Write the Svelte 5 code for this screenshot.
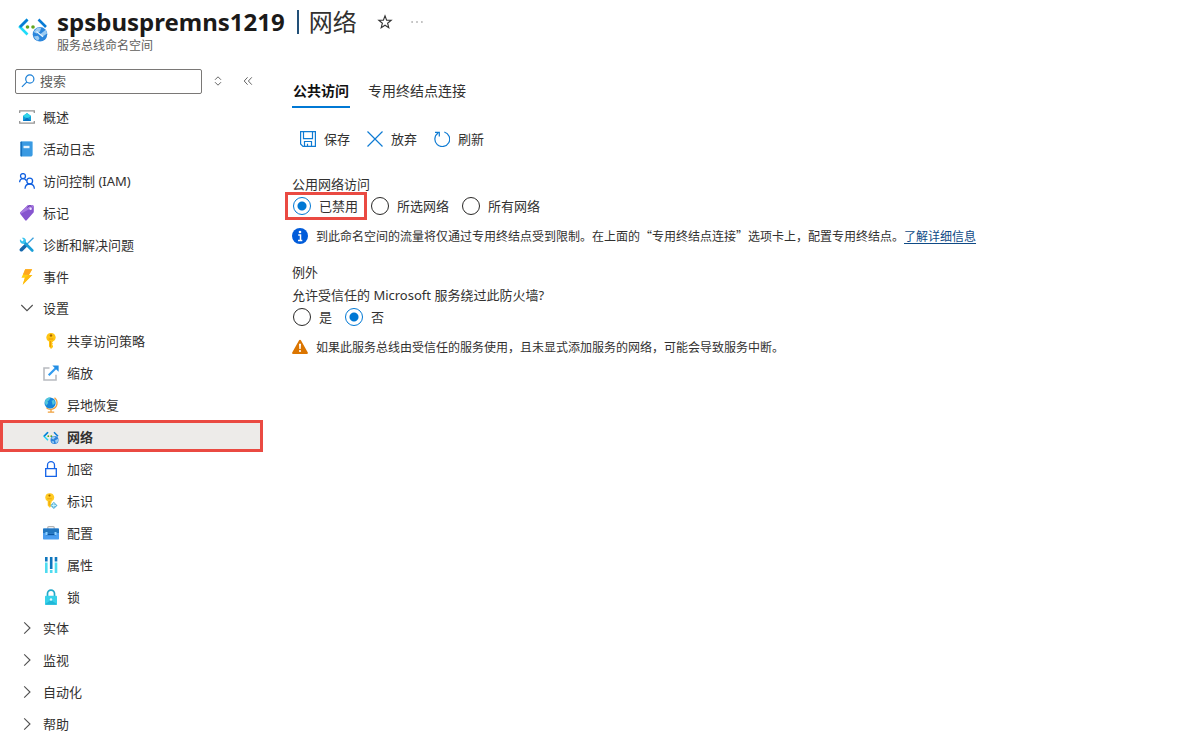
<script>
  let access = $state('disabled');
  let trusted = $state('no');
  let search = $state('');

  const items = [
    { icon: 'overview', text: '概述' },
    { icon: 'log', text: '活动日志' },
    { icon: 'people', text: '访问控制 (IAM)' },
    { icon: 'tag', text: '标记' },
    { icon: 'tools', text: '诊断和解决问题' },
    { icon: 'bolt', text: '事件' },
  ];

  const settings = [
    { icon: 'key', text: '共享访问策略' },
    { icon: 'scale', text: '缩放' },
    { icon: 'globe', text: '异地恢复' },
    { icon: 'network', text: '网络', active: true },
    { icon: 'padlock', text: '加密' },
    { icon: 'identity', text: '标识' },
    { icon: 'toolbox', text: '配置' },
    { icon: 'bars', text: '属性' },
    { icon: 'lock', text: '锁' },
  ];

  const groups = ['实体', '监视', '自动化', '帮助'];

  const accessOptions = [
    { value: 'disabled', text: '已禁用', marked: true },
    { value: 'selected', text: '所选网络' },
    { value: 'all', text: '所有网络' },
  ];

  const trustedOptions = [
    { value: 'yes', text: '是' },
    { value: 'no', text: '否' },
  ];
</script>

{#snippet icon(name)}
  <svg class="icon" viewBox="0 0 16 16" fill="none" aria-hidden="true">
    {#if name === 'overview'}
      <path d="M.7 4V1.800h14.600V4M.7 12v2.200h14.600V12" stroke="#949494" stroke-width="1.300" />
      <path d="M4 7l4-3 4 3v5H4z" fill="#0f9fd8" />
      <path d="M4 7l4-3 4 3-4 2.500z" fill="#32d4e8" />
      <path d="M4 12l4-3.600L12 12z" fill="#0a74c4" />
    {:else if name === 'log'}
      <path d="M3 .5h11v14H3z" fill="#8cc8f2" />
      <rect x="1.500" y=".5" width="11.600" height="15" rx="1" fill="#3a9ae2" />
      <rect x="1.500" y=".5" width="1.600" height="15" rx=".8" fill="#1570bd" />
      <rect x="4.500" y="4.800" width="6" height="2.400" fill="#e6f4ff" />
    {:else if name === 'people'}
      <g stroke="#1060e0" stroke-width="1.300">
        <circle cx="4" cy="3.100" r="2.500" />
        <circle cx="10.700" cy="8.100" r="2.900" />
        <path d="M.6 9.200C.8 6.800 2.200 5.700 4 5.700c1.500 0 2.800.7 3.400 2M6 15.700c.2-2.900 2.200-4.700 4.700-4.700s4.500 1.800 4.700 4.700" />
      </g>
    {:else if name === 'tag'}
      <path d="M1.300 7.300L8 .9c.5-.5 1-.6 1.700-.6h3.600c1 0 1.500.6 1.500 1.500v4.600c0 .7-.2 1.200-.7 1.700L7.700 15.300c-.5.5-1 .5-1.500 0L1.300 9c-.5-.6-.5-1.200 0-1.700z" fill="#8655cf" />
      <path d="M1.300 7.300L8 .9c.5-.5 1-.6 1.700-.6h3.600c1 0 1.500.6 1.500 1.500L1.400 9.100c-.6-.7-.6-1.200-.1-1.800z" fill="#a67ae0" />
      <path d="M8.500 2.500c1-2 3-2.400 4-.7" stroke="#5b2a9d" />
      <circle cx="11.600" cy="3.800" r="1.200" fill="#f0e6ff" />
    {:else if name === 'tools'}
      <path d="M14.500.7l-9.900 9.700" stroke="#3ca0dc" stroke-width="1.300" />
      <path d="M6.200 8.900L2.400 12.700" stroke="#1568ad" stroke-width="3.600" stroke-linecap="round" />
      <path d="M5 5l8.300 8.500" stroke="#1a9fd8" stroke-width="2.700" stroke-linecap="round" />
      <path d="M1 2.200l2.300 2.200 1.500-1.500L2.800.8c2.500-.8 4.800 1.300 4.100 4L5 6.800C2.300 7.300.3 5 1 2.200z" fill="#38c4ef" />
    {:else if name === 'bolt'}
      <path d="M6.200.3h7L9.900 5.900h3.400L3.700 15.700l2.200-7H2.500z" fill="#ffcf10" />
      <path d="M6.200.3h7L9.900 5.900 4.100 5.400z" fill="#ffa51f" />
      <path d="M9.900 5.900h3.400L3.700 15.700l2.200-7z" fill="#ffbb10" />
    {:else if name === 'key'}
      <path d="M8 0a4.500 4.500 0 0 0-2 8.600v5L8 16l2-2v-1.200l-1-1 1-1-1-1 1-1.200A4.500 4.500 0 0 0 8 0z" fill="#ffc515" />
      <circle cx="8" cy="2.500" r="1.200" fill="#a86a00" />
      <path d="M5.700 6h4.600M7.400 8v5.800" stroke="#eb9800" />
    {:else if name === 'scale'}
      <path d="M6.500 3H1v12h12V9.700" stroke="#b8bbc0" stroke-width="1.600" />
      <path d="M5.700 10.300L13 3" stroke="#329cf0" stroke-width="2.200" />
      <path d="M9.300.4h6.300v6.300z" fill="#238de3" />
    {:else if name === 'globe'}
      <path d="M11.500.8c4 3.200 3.200 10-2.200 11.300-2.500.6-4.500 0-6-1.500M8 12.500V15M4.800 15.200h6.400" stroke="#f0a03c" stroke-width="1.300" />
      <circle cx="7.100" cy="6" r="5.600" fill="#1685d9" />
      <path d="M2.500 2.800C4 .7 6 .3 7.600.7L5.900 3.500 4.500 4.300l.8 1.600-2 2.600C2 7.300 1.500 5 2.500 2.800zM8.600 3.800l2.600-1 .8 3.400-2.200 2z" fill="#52c6dc" />
    {:else if name === 'network'}
      <path d="M5 3.300L1 7.200l4 4.100" stroke="#24d2f4" stroke-width="1.500" />
      <path d="M5 3.300L1 7.200M11 3.300l4 3.900" stroke="#087bd5" stroke-width="1.500" />
      <circle cx="5.300" cy="7.200" r=".9" fill="#56a51d" />
      <circle cx="8.300" cy="7.200" r=".9" fill="#56a51d" />
      <circle cx="11.500" cy="11" r="4" fill="#2c83db" />
      <path d="M8.200 9.300l2.300-2 2.200.7-2.300 2.600zM12 11.500l3-1.700v2.400L13 14.500zM8.400 12.400l2-.5.800 1.500-1 1.200z" fill="#9dcef3" />
    {:else if name === 'padlock'}
      <path d="M2.700 7.600h10.600v7.800H2.700zM4.500 7.500V4.200a3.500 3.500 0 0 1 7 0v3.300" stroke="#1463e8" stroke-width="1.300" />
    {:else if name === 'identity'}
      <path d="M6.500.3a4.200 4.200 0 0 0-1.800 8v4.200l2 2.300 2-2v-1.500l-1-1 1-1v-1A4.200 4.200 0 0 0 6.500.3z" fill="#ffca23" />
      <circle cx="6.500" cy="2.600" r="1.100" fill="#ab7000" />
      <path d="M4.300 5.800h4.400M6.200 8v4.500" stroke="#eca40a" />
      <path d="M10.800 8.800l3.700 3.600-3.700 3.600L7.200 12.400z" fill="#5db5dc" />
      <path d="M10.800 9.900v4.500M8.700 12.400H13" stroke="#d1f4ff" />
    {:else if name === 'toolbox'}
      <path d="M4.800 4V2.500c0-.6.300-.9.900-.9h4.600c.6 0 .9.300.9.900V4" stroke="#b4b4b4" stroke-width="1.300" />
      <rect y="3.500" width="16" height="11" rx=".7" fill="#4a9df0" />
      <path d="M0 4.300c0-.5.300-.8.800-.8h14.400c.5 0 .8.300.8.800V8H0z" fill="#2376bf" />
      <path d="M3 8.500h10v1.700H3z" fill="#0b57a0" />
      <path d="M2.500 7h2v3h-2zM11.500 7h2v3h-2z" fill="#8ed2ff" />
    {:else if name === 'bars'}
      <path d="M3.300 0v4.500M13 0v4.500M8.200 0v12" stroke="#0f76bd" stroke-width="2.600" />
      <path d="M3.300 5.500V16M13 5.500V16M8.200 13v3" stroke="#4fdcf0" stroke-width="2.600" />
    {:else if name === 'lock'}
      <path d="M4.500 7.500V4.600a3.500 3.500 0 0 1 7 0v2.900" stroke="#22a9ca" stroke-width="1.700" />
      <rect x="2" y="6.800" width="12" height="8.900" rx=".8" fill="#37d1e9" />
      <path d="M2 15.200L8 11l6 4.200c-.1.300-.4.500-.8.500H2.800c-.4 0-.7-.2-.8-.5z" fill="#20b7d8" />
      <circle cx="8" cy="10.500" r="1.200" fill="#dffaff" />
    {:else if name === 'down'}
      <path d="M2.300 5l5.700 5.700L13.700 5" stroke="#505050" stroke-width="1.100" />
    {:else if name === 'right'}
      <path d="M5.200 2.300L11 8l-5.800 5.700" stroke="#505050" stroke-width="1.100" />
    {:else if name === 'save'}
      <path d="M.6.600h14.800v14.800H3L.6 13zM3.500.6v7h9v-7M4.500 15.400v-4.900h7v4.900M7.500 15v-2.300" stroke="#0f7bd3" stroke-width="1.200" />
    {:else if name === 'discard'}
      <path d="M.5.500l15 15M15.500.500l-15 15" stroke="#0f7bd3" stroke-width="1.200" />
    {:else if name === 'refresh'}
      <path d="M10.300 1a7.400 7.400 0 1 1-6.200 1M1 1.300h4.300v4.200" stroke="#0f7bd3" stroke-width="1.200" />
    {:else if name === 'search'}
      <circle cx="9.800" cy="6" r="4.100" stroke="#1a7fd6" stroke-width="1.200" />
      <path d="M6.900 8.900l-5 5" stroke="#1a7fd6" stroke-width="1.200" />
    {:else if name === 'sort'}
      <path d="M5 6.800l3-3 3 3M5 9.200l3 3 3-3" stroke="#666" />
    {:else if name === 'collapse'}
      <path d="M7.600 4.300L4.200 8l3.400 3.700M11.800 4.300L8.400 8l3.400 3.700" stroke="#666" />
    {:else if name === 'star'}
      <path d="M8 1.800l1.600 4.300 4.600.2-3.600 2.900 1.200 4.500L8 11.200l-3.800 2.500 1.200-4.500-3.600-2.900 4.600-.2z" stroke="#333" stroke-width="1.100" />
    {:else if name === 'more'}
      <path d="M2.500 8h1.200M7.400 8h1.200M12.300 8h1.200" stroke="#555" stroke-width="1.200" />
    {:else if name === 'info'}
      <circle cx="8" cy="8" r="8" fill="#015cda" />
      <circle cx="8" cy="4" r="1.300" fill="#fff" />
      <path d="M6.200 7h2.300v5.500M6 12.500h4.300" stroke="#fff" stroke-width="1.500" />
    {:else if name === 'warning'}
      <path d="M8 .8c.4 0 .7.200.9.500l6.900 12.300c.3.700-.1 1.400-.8 1.400H1c-.7 0-1.100-.7-.8-1.400L7.100 1.300c.2-.3.500-.5.900-.5z" fill="#db7500" />
      <path d="M7 4.700h2l-.3 5.300H7.300z" fill="#fff" />
      <circle cx="8" cy="12" r="1.100" fill="#fff" />
    {/if}
  </svg>
{/snippet}

<header>
  <svg class="logo" viewBox="0 0 30 26" fill="none" aria-hidden="true">
    <path d="M9.500 2.500L2 10l7.500 7.500" stroke="#20dcfa" stroke-width="2.600" />
    <path d="M9.500 2.500L2 10M20.500 2.500L28 10" stroke="#087bd5" stroke-width="2.600" />
    <circle cx="9.500" cy="10" r="1.800" fill="#62a51f" />
    <circle cx="15" cy="10" r="1.800" fill="#62a51f" />
    <circle cx="22" cy="17.300" r="7.300" fill="#2b86dc" />
    <path d="M15.500 15l4-4.500 3.700.3-1.200 3.700-3.500 2zM22.500 17l5.500-4.500 1 4-4.800 3.500zM16 19.500l4-.8 1.500 2.500-1.500 2.500c-2-.7-3.300-2.200-4-4.200z" fill="#9ccbf1" />
    <path d="M18.500 14.500l6.500 5.300" stroke="#e8f6ff" stroke-width="1.300" />
  </svg>
  <div>
    <h1><b>spsbuspremns1219</b><span class="bar"></span>网络
      <button class="star" aria-label="收藏">{@render icon('star')}</button>
      <button aria-label="更多">{@render icon('more')}</button>
    </h1>
    <p class="subtitle">服务总线命名空间</p>
  </div>
</header>

<div class="body">
  <aside>
    <div class="filter">
      <label class="search">
        {@render icon('search')}
        <input type="text" placeholder="搜索" aria-label="搜索" bind:value={search} />
      </label>
      <button aria-label="排序">{@render icon('sort')}</button>
      <button class="collapse" aria-label="折叠">{@render icon('collapse')}</button>
    </div>
    <nav>
      {#each items as item}
        <a href="#menu">{@render icon(item.icon)}{item.text}</a>
      {/each}
      <button class="group">{@render icon('down')}设置</button>
      {#each settings as item}
        <a class="sub" class:active={item.active} href="#menu">{@render icon(item.icon)}{item.text}</a>
      {/each}
      {#each groups as group}
        <button class="group">{@render icon('right')}{group}</button>
      {/each}
    </nav>
  </aside>

  <main>
    <div class="tabs" role="tablist">
      <button role="tab" aria-selected="true" class="current">公共访问</button>
      <button role="tab" aria-selected="false">专用终结点连接</button>
    </div>

    <div class="toolbar">
      <button>{@render icon('save')}保存</button>
      <button>{@render icon('discard')}放弃</button>
      <button>{@render icon('refresh')}刷新</button>
    </div>

    <fieldset>
      <legend>公用网络访问</legend>
      <div class="options">
        {#each accessOptions as option}
          <label class:marked={option.marked}>
            <input type="radio" name="access" value={option.value} bind:group={access} />{option.text}
          </label>
        {/each}
      </div>
    </fieldset>
    <p class="note">
      {@render icon('info')}
      <span>到此命名空间的流量将仅通过专用终结点受到限制。在上面的“专用终结点连接”选项卡上，配置专用终结点。<a href="#learn">了解详细信息</a></span>
    </p>

    <h2>例外</h2>
    <fieldset>
      <legend>允许受信任的 Microsoft 服务绕过此防火墙?</legend>
      <div class="options">
        {#each trustedOptions as option}
          <label>
            <input type="radio" name="trusted" value={option.value} bind:group={trusted} />{option.text}
          </label>
        {/each}
      </div>
    </fieldset>
    <p class="note">
      {@render icon('warning')}
      <span>如果此服务总线由受信任的服务使用，且未显式添加服务的网络，可能会导致服务中断。</span>
    </p>
  </main>
</div>

<style>
  :global(body) {
    background: #fff;
    color: #323130;
    font: 13px/18px "Noto Sans", "Noto Sans CJK SC", sans-serif;
  }

  button {
    display: flex;
    align-items: center;
    padding: 0;
    border: 0;
    background: none;
    color: inherit;
    font: inherit;
    cursor: pointer;
  }

  .icon {
    flex: none;
    width: 16px;
    height: 16px;
  }

  header {
    display: flex;
    align-items: flex-start;
    gap: 9px;
    height: 63px;
    padding-left: 18px;
  }

  .logo {
    width: 30px;
    height: 26px;
    margin-top: 17px;
  }

  h1 {
    display: flex;
    align-items: center;
    height: 38px;
    margin: 3px 0 0;
    font-size: 24px;
    line-height: 38px;
    font-weight: 400;
  }

  h1 b {
    color: #1b1a19;
    font-weight: 700;
  }

  .bar {
    width: 2px;
    height: 24px;
    margin: 0 10px 0 12px;
    background: #225078;
  }

  .star {
    margin: 0 16px 0 20px;
  }

  .subtitle {
    margin: -4px 0 0;
    color: #605e5c;
    font-size: 12px;
  }

  .body {
    display: flex;
    align-items: flex-start;
  }

  aside {
    flex: none;
    width: 263px;
  }

  .filter {
    display: flex;
    align-items: center;
    height: 36px;
    margin-bottom: 1px;
    padding-left: 15px;
  }

  .search {
    display: flex;
    flex: none;
    align-items: center;
    gap: 4px;
    box-sizing: border-box;
    width: 187px;
    height: 25px;
    margin-right: 8px;
    padding-left: 4px;
    border: 1px solid #7a7876;
    border-radius: 2px;
  }

  .search input {
    min-width: 0;
    flex: 1;
    padding: 0;
    border: 0;
    outline: 0;
    background: none;
    font: inherit;
  }

  .search input::placeholder {
    color: #605e5c;
  }

  .collapse {
    margin-left: 14px;
  }

  nav a,
  .group {
    display: flex;
    align-items: center;
    gap: 8px;
    box-sizing: border-box;
    width: 100%;
    height: 32px;
    padding-left: 19px;
    color: inherit;
    text-decoration: none;
  }

  nav a {
    padding-top: 2px;
  }

  nav .sub {
    padding-left: 43px;
  }

  nav .active {
    padding-left: 40px;
    border: 3px solid #ea4a42;
    background: #edebe9;
    font-weight: 700;
  }

  main {
    flex: 1;
    min-width: 0;
    padding: 0 16px 0 29px;
  }

  .tabs {
    display: flex;
    gap: 17px;
    height: 45px;
    font-size: 14px;
  }

  .tabs button {
    padding: 12px 1px 0;
    border-bottom: 2px solid transparent;
  }

  .tabs .current {
    border-color: #0078d4;
    color: #111;
    font-weight: 700;
  }

  .toolbar {
    display: flex;
    gap: 17px;
    height: 30px;
    margin: 16px 0 21px 8px;
  }

  .toolbar button {
    gap: 8px;
  }

  fieldset {
    min-width: 0;
    margin: 0;
    padding: 0;
    border: 0;
  }

  legend {
    padding: 0;
  }

  .options {
    display: flex;
    gap: 13px;
    padding: 4px 0 0 1px;
  }

  .options label {
    position: relative;
    display: flex;
    align-items: center;
    gap: 8px;
    height: 18px;
  }

  .marked::after {
    content: "";
    position: absolute;
    inset: -5px -9px -5px -8px;
    border: 3px solid #ea4a42;
  }

  .options input {
    appearance: none;
    width: 18px;
    height: 18px;
    margin: 0;
    border: 1px solid #292827;
    border-radius: 50%;
  }

  .options input:checked {
    border-color: #0078d4;
    background: radial-gradient(circle, #0078d4 4px, transparent 5px);
  }

  .note {
    display: flex;
    align-items: center;
    gap: 8px;
    margin: 12px 0 0;
    font: 12px/18px "Noto Sans CJK SC", sans-serif;
  }

  .note a {
    color: #0f4a85;
    text-underline-offset: 2px;
  }

  h2 {
    margin: 18px 0 5px;
    font-size: 13px;
    line-height: 18px;
    font-weight: 400;
  }
</style>
